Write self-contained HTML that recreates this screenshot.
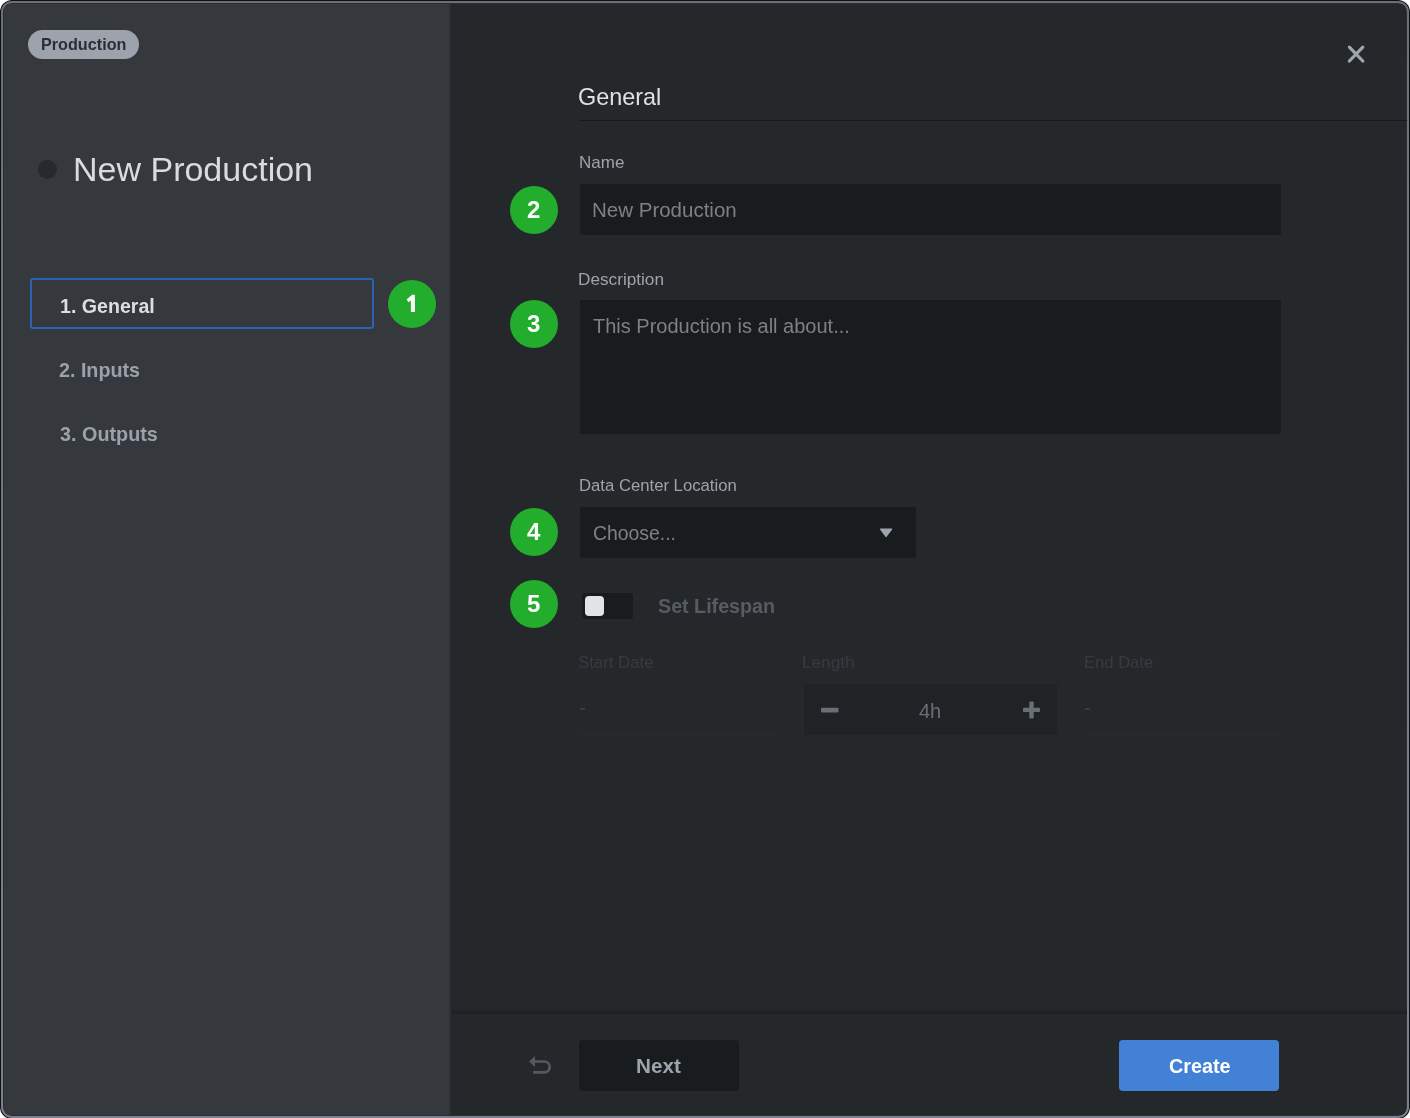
<!DOCTYPE html>
<html><head><meta charset="utf-8"><title>New Production</title>
<style>
html,body{margin:0;padding:0}
body{width:1410px;height:1118px;overflow:hidden;position:relative;background:#fff;font-family:"Liberation Sans",sans-serif}
.t{position:absolute;white-space:nowrap;line-height:1;-webkit-font-smoothing:antialiased;will-change:transform}
.frame{position:absolute;left:0;top:0;width:1410px;height:1119px;border-radius:12px;background:#0d0f10}
.ring{position:absolute;left:1px;top:1px;width:1408px;height:1117px;border-radius:11px;background:linear-gradient(#6a7079,#737a85 50%,#7a818c)}
.inner{position:absolute;left:3px;top:3px;width:1404px;height:1113px;border-radius:9px;overflow:hidden;background:#2a2d31}
.rp{position:absolute;left:448px;top:1px;width:955px;height:1111px;background:#25282b}
.lp{position:absolute;left:1px;top:1px;width:446px;height:1111px;background:#35383c}
.dv{position:absolute;left:446px;top:1px;width:2px;height:1111px;background:linear-gradient(90deg,#313438,#282b2f)}
.foot{position:absolute;left:449px;top:1006px;width:955px;height:5px;background:linear-gradient(#25282b,#1f2225 70%,#1c1f22)}
.abs{position:absolute}
.pill{left:28px;top:30px;width:111px;height:29px;border-radius:15px;background:#9da3ad}
.dot{left:38px;top:160px;width:19px;height:19px;border-radius:50%;background:#262a2d}
.navbox{left:30px;top:278px;width:340px;height:47px;border:2px solid #2b63b2;border-radius:3px}
.badge{width:48px;height:48px;border-radius:50%;background:#23ad2c}
.field{background:#191c1e;border-radius:2px}
.hline{left:579px;top:120px;width:828px;height:1px;background:#17191c}
.track{left:582px;top:593px;width:51px;height:25.5px;border-radius:3px;background:#191c1e}
.knob{left:585px;top:596px;width:19px;height:20px;border-radius:4px;background:#e2e3e5}
.uline{height:1px;background:#2a2d30}
.lenbox{left:804px;top:684px;width:253px;height:51px;background:#202326}
.btn{top:1040px;width:160px;height:51px;border-radius:4px}
</style></head>
<body>
<div class="frame"></div>
<div class="ring"></div>
<div class="inner">
  <div class="lp"></div>
  <div class="rp"></div>
  <div class="dv"></div>
  <div class="foot"></div>
</div>
<div class="abs pill"></div>
<div class="abs dot"></div>
<div class="abs navbox"></div>
<div class="abs badge" style="left:388px;top:280px"></div>
<svg class="abs" style="left:400px;top:290px" width="24" height="26" viewBox="400 290 24 26"><path d="M406.6 299.6 L412.0 294.7 L414.9 294.7 L414.9 312.1 L410.9 312.1 L410.9 300.4 L408.6 302.2 Z" fill="#fff"/></svg>
<svg class="abs" style="left:1340px;top:38px" width="32" height="32" viewBox="0 0 32 32"><path d="M9.4 9.1 L22.8 23 M22.8 9.1 L9.4 23" stroke="#a0a5ae" stroke-width="3.2" stroke-linecap="round" fill="none"/></svg>
<div class="abs hline"></div>
<div class="abs badge" style="left:510px;top:186px"></div>
<div class="abs field" style="left:580px;top:184px;width:701px;height:51px"></div>
<div class="abs badge" style="left:510px;top:300px"></div>
<div class="abs field" style="left:580px;top:300px;width:701px;height:134px"></div>
<div class="abs badge" style="left:510px;top:508px"></div>
<div class="abs field" style="left:580px;top:507px;width:336px;height:51px"></div>
<svg class="abs" style="left:876px;top:524px" width="20" height="18" viewBox="0 0 20 18"><path d="M4.9 4.6 L15.4 4.6 Q16.9 4.6 16 5.8 L10.8 12.6 Q10 13.6 9.2 12.6 L4.2 5.8 Q3.4 4.6 4.9 4.6 Z" fill="#9ea4ae"/></svg>
<div class="abs badge" style="left:510px;top:580px"></div>
<div class="abs track"></div>
<div class="abs knob"></div>
<div class="abs uline" style="left:579px;top:734px;width:197px"></div>
<div class="abs" style="left:580px;top:708px;width:4.5px;height:1.6px;background:#383b3f"></div>
<div class="abs" style="left:1085px;top:708px;width:4.5px;height:1.6px;background:#383b3f"></div>
<div class="abs lenbox"></div>
<svg class="abs" style="left:816px;top:700px" width="28" height="20" viewBox="0 0 28 20"><rect x="5" y="7.8" width="17.5" height="4.6" rx="0.8" fill="#6a6e75"/></svg>
<svg class="abs" style="left:1018px;top:696px" width="28" height="28" viewBox="0 0 28 28"><rect x="11.3" y="5.4" width="4.4" height="17" rx="1" fill="#6a6e75"/><rect x="5" y="11.7" width="17" height="4.4" rx="1" fill="#6a6e75"/></svg>
<div class="abs uline" style="left:1085px;top:734px;width:196px"></div>
<svg class="abs" style="left:520px;top:1048px" width="40" height="34" viewBox="520 1048 40 34"><path d="M534 1061.5 H544.3 A5.4 5.4 0 0 1 544.3 1072.3 H533.1" stroke="#55595f" stroke-width="2.7" fill="none"/><path d="M529.1 1061.5 L535 1056 L535 1067 Z" fill="#55595f"/></svg>
<div class="abs btn" style="left:579px;background:#191c1e"></div>
<div class="abs btn" style="left:1119px;background:#4281d5"></div>

<div class="t" id="pill" style="left:41.00px;top:35.91px;font-size:16.2px;font-weight:700;color:#2b2e33">Production</div>
<div class="t" id="title" style="left:73.00px;top:152.31px;font-size:34.0px;font-weight:400;color:#dadbde">New Production</div>
<div class="t" id="nav1" style="left:59.50px;top:296.91px;font-size:19.6px;font-weight:700;color:#dcdee1">1. General</div>
<div class="t" id="nav2" style="left:59.00px;top:360.61px;font-size:19.7px;font-weight:700;color:#9ba1ab">2. Inputs</div>
<div class="t" id="nav3" style="left:60.00px;top:424.50px;font-size:19.8px;font-weight:700;color:#9ba1ab">3. Outputs</div>
<div class="t" id="hdr" style="left:578.00px;top:85.60px;font-size:23.4px;font-weight:400;color:#e0e1e3">General</div>
<div class="t" id="lname" style="left:578.50px;top:154.41px;font-size:17.0px;font-weight:400;color:#9ea3ab">Name</div>
<div class="t" id="vname" style="left:592.00px;top:200.41px;font-size:20.5px;font-weight:400;color:#7e8184">New Production</div>
<div class="t" id="ldesc" style="left:578.00px;top:270.82px;font-size:17.2px;font-weight:400;color:#9ea3ab">Description</div>
<div class="t" id="vdesc" style="left:593.00px;top:315.71px;font-size:20.0px;font-weight:400;color:#7e8184">This Production is all about...</div>
<div class="t" id="ldc" style="left:578.50px;top:478.21px;font-size:16.7px;font-weight:400;color:#9ea3ab">Data Center Location</div>
<div class="t" id="vdc" style="left:592.50px;top:524.20px;font-size:19.4px;font-weight:400;color:#7e8184">Choose...</div>
<div class="t" id="life" style="left:657.70px;top:597.21px;font-size:19.7px;font-weight:700;color:#575c63">Set Lifespan</div>
<div class="t" id="lstart" style="left:577.70px;top:655.01px;font-size:16.8px;font-weight:400;color:#373b3f">Start Date</div>
<div class="t" id="llen" style="left:802.00px;top:654.41px;font-size:17.2px;font-weight:400;color:#373b3f">Length</div>
<div class="t" id="lend" style="left:1083.50px;top:655.01px;font-size:16.6px;font-weight:400;color:#373b3f">End Date</div>
<div class="t" id="v4h" style="left:919.00px;top:701.41px;font-size:20.0px;font-weight:400;color:#6b6f75">4h</div>
<div class="t" id="create" style="left:1168.50px;top:1056.50px;font-size:19.8px;font-weight:700;color:#ffffff">Create</div>
<div class="t" id="next" style="left:635.50px;top:1055.51px;font-size:20.7px;font-weight:700;color:#9ea4ae">Next</div>
<div class="t" id="b2" style="left:527.00px;top:198.01px;font-size:24.0px;font-weight:700;color:#ffffff">2</div>
<div class="t" id="b3" style="left:527.00px;top:312.01px;font-size:24.0px;font-weight:700;color:#ffffff">3</div>
<div class="t" id="b4" style="left:527.00px;top:520.01px;font-size:24.0px;font-weight:700;color:#ffffff">4</div>
<div class="t" id="b5" style="left:527.00px;top:592.01px;font-size:24.0px;font-weight:700;color:#ffffff">5</div>
</body></html>
